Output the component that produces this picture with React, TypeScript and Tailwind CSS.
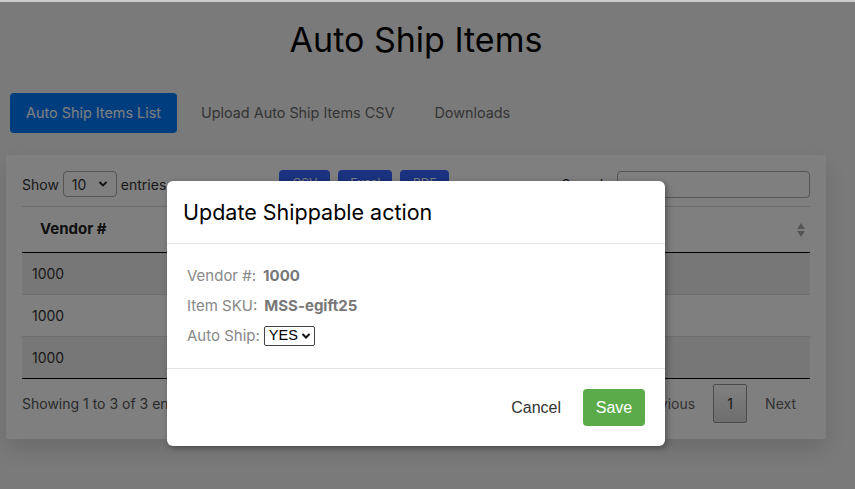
import React from "react";

const F = "font-['Inter','Noto_Sans',sans-serif]";

function SortIcon() {
  return (
    <svg width="10" height="16" viewBox="0 0 10 16" className="block">
      <path d="M5 1 L9 7 H1 Z" fill="#aaaaaa" />
      <path d="M5 15 L9 9 H1 Z" fill="#aaaaaa" />
    </svg>
  );
}

export default function App() {
  const rows = ["1000", "1000", "1000"];
  return (
    <div className={`relative min-h-[489px] w-full overflow-hidden bg-[#f4f4f4] border-t-2 border-[#cccccc] ${F}`}>
      <div className="w-[832px]">
        <h1 className="pt-[14px] text-center text-[34px] leading-[48px] text-black">Auto Ship Items</h1>

        <div className="mt-[29px] ml-[10px] flex gap-2 text-[14.4px]">
          <div className="flex h-[40px] items-center rounded bg-[#007bff] px-4 text-white">Auto Ship Items List</div>
          <div className="flex h-[40px] items-center px-4 text-[#6a6a6a]">Upload Auto Ship Items CSV</div>
          <div className="flex h-[40px] items-center px-4 text-[#6a6a6a]">Downloads</div>
        </div>

        <div className="mt-[22px] ml-[6px] w-[820px] bg-white px-4 pt-4 pb-4 shadow-[0_10px_20px_rgba(0,0,0,0.12)]">
          <div className="flex h-[26px] items-center text-[14px] text-[#333]">
            <span>Show</span>
            <div className="mx-[4px] flex h-[26px] w-[54px] items-center justify-between rounded border border-[#aaaaaa] px-2">
              <span>10</span>
              <svg width="10" height="8" viewBox="0 0 10 8"><path d="M1.5 2 L5 5.5 L8.5 2" fill="none" stroke="#222" strokeWidth="1.8" /></svg>
            </div>
            <span>entries</span>
            <div className="ml-[113px] flex gap-2 self-start -mt-[1px]">
              <div className="flex h-[26px] w-[51px] justify-center rounded bg-[#3464ff] pt-[4px] text-[12px] text-white">CSV</div>
              <div className="flex h-[26px] w-[54px] justify-center rounded bg-[#3464ff] pt-[4px] text-[12px] text-white">Excel</div>
              <div className="flex h-[26px] w-[49px] justify-center rounded bg-[#3464ff] pt-[4px] text-[12px] text-white">PDF</div>
            </div>
            <div className="ml-auto flex items-center gap-[5px]">
              <span>Search:</span>
              <div className="h-[27px] w-[193px] rounded border border-[#aaaaaa]" />
            </div>
          </div>

          <div className="mt-[9px] border-t border-[#dddddd]">
            <div className="flex h-[46px] items-center justify-between border-b border-black text-[15px] font-bold text-[#222]">
              <div className="pl-[18px]">Vendor #</div>
              <div className="pr-[4px]">
                <SortIcon />
              </div>
            </div>
            {rows.map((r, i) => (
              <div
                key={i}
                className={`flex h-[42px] items-center text-[14px] text-[#333] ${
                  i % 2 === 0 ? "bg-[#eeeeee]" : "bg-white"
                } ${i === rows.length - 1 ? "border-b border-black" : "border-b border-[#dddddd]"}`}
              >
                <div className="pl-[10px]">{r}</div>
              </div>
            ))}
          </div>

          <div className="mt-[5px] flex h-[39px] items-center text-[14px] text-[#555]">
            <span>Showing 1 to 3 of 3 entries</span>
            <div className="ml-auto flex h-[39px] items-center">
              <span className="px-4 text-[#666]">Previous</span>
              <div className="ml-[2px] flex h-[39px] w-[34px] items-center justify-center rounded-[2px] border border-[#979797] bg-gradient-to-b from-white to-[#dcdcdc] text-[#333]">
                1
              </div>
              <span className="ml-[2px] pl-4 pr-[14px] text-[#666]">Next</span>
            </div>
          </div>
        </div>
      </div>

      <div className="absolute inset-0 bg-black/50">
        <div className="absolute left-[167px] top-[179px] w-[498px] rounded-md bg-white shadow-[2px_2px_6px_rgba(0,0,0,0.35)]">
          <div className="border-b border-[#e5e5e5] px-4 py-4">
            <h2 className="text-[21.5px] leading-[30px] text-black">Update Shippable action</h2>
          </div>
          <div className="px-5 pt-[17px] pb-[17px] text-[15px]">
            <div className="flex h-[30px] items-center">
              <span className="text-[#888]">Vendor #:</span>
              <span className="ml-[7px] font-bold text-[#777]">1000</span>
            </div>
            <div className="flex h-[30px] items-center">
              <span className="text-[#888]">Item SKU:</span>
              <span className="ml-[7px] font-bold text-[#777]">MSS-egift25</span>
            </div>
            <div className="flex h-[30px] items-center">
              <span className="text-[#888]">Auto Ship:</span>
              <div className="ml-[4px] flex h-[20px] w-[51px] items-center justify-between rounded-[2px] border border-[#444] pl-[4px] pr-[3px] font-['Liberation_Sans',Arial,sans-serif] text-[14.5px] text-black">
                <span>YES</span>
                <svg width="10" height="8" viewBox="0 0 10 8"><path d="M1.5 2 L5 5.5 L8.5 2" fill="none" stroke="#111" strokeWidth="2" /></svg>
              </div>
            </div>
          </div>
          <div className="flex items-center justify-end border-t border-[#e5e5e5] px-5 py-5 font-['Liberation_Sans',Arial,sans-serif] text-[16px]">
            <span className="mr-[22px] text-[#333]">Cancel</span>
            <div className="flex h-[37px] w-[62px] items-center justify-center rounded bg-[#5cab4b] text-white">Save</div>
          </div>
        </div>
      </div>
    </div>
  );
}
